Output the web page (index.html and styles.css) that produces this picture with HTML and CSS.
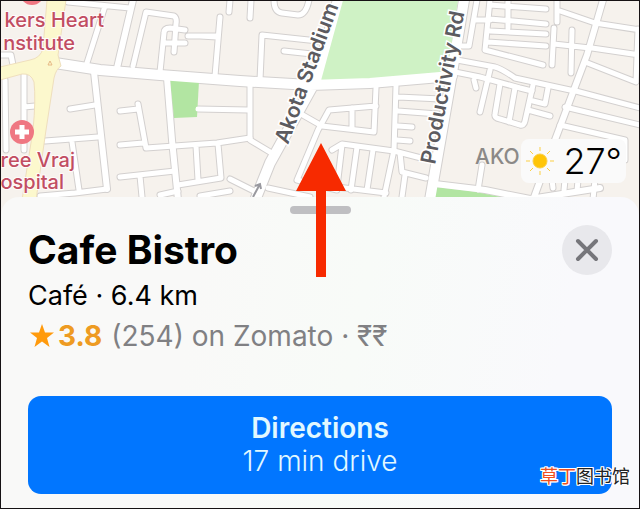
FILE: index.html
```
<!DOCTYPE html>
<html lang="en">
<head>
    <meta charset="UTF-8">
    <meta name="viewport" content="width=device-width, initial-scale=1.0">
    <title>Cafe Bistro</title>
    <link rel="stylesheet" href="styles.css">
</head>
<body>
    <div class="screen">
        <div class="map">
            <svg class="map-canvas" viewBox="1 1 638 216" preserveAspectRatio="xMidYMin slice" aria-label="Map">
                <defs>
                    <g id="small-roads">
                        <path d="M68 2L130 8M105 6L86 66M133 66L146 12L174 16Q177 18 176 24L174 52M160 72L164 33Q164 28 170 28L185 30M166 43H185M188 36H218M220 17L215 76M200 36L217 37"/>
                        <path d="M70 109L95 105M45 141L98 137M72 142L79 190M24 75V150M24 107L35 106M0 55L11 55L13 65M5 80L6 150M40 196L75 193L107 189"/>
                        <path d="M120 111L138 109M138 104L146 148L217 143L250 138M120 145L143 143M120 177L175 171M140 176L142 197M198 109L248 110M196 146L198 180M178 185L221 178L218 144M178 191L160 195"/>
                        <path d="M230 0L229 12M251 0L250 18M274 0Q274 12 282 13L298 15Q306 15 309 0M260 80L262 35L318 41M284 51L312 54M250 85V140L270 152M230 179L256 192M268 188L310 197M200 196L230 191"/>
                        <path d="M301 114L322 126L374 132L376 88M297 180L318 130L329 110L376 106M352 108V128M297 180L337 190M332 150L342 144L394 151L425 159"/>
                        <path d="M396 86L394 150L384 197M398 97L441 99M398 111L438 114M398 126L412 127M397 140L410 141M342 145L337 187L386 193M357 147L351 190M373 150L367 190M400 153L402 172L426 178M405 175L402 197"/>
                        <path d="M477 0L469 46H462M490 0L485 50L543 65M474 20H490M490 5L546 9M490 19L546 24M490 31L546 34M488 42L546 46M508 0V28M457 60L495 67Q502 69 515 78L570 90M455 72L480 77L520 88L532 91M474 80L476 88M490 70L480 112"/>
                        <path d="M500 84L495 114Q494 118 500 119L520 125Q524 126 525 121L533 85M515 88L509 122M533 101L545 104L548 88M528 110L550 116M557 0V22M554 28L552 65M554 44L590 48M572 30L571 73"/>
                        <path d="M560 11L595 23L640 30M592 48L640 55M585 62L636 82L638 29M572 90L640 108M565 107L640 125M560 125L625 140V160M482 165L478 190M552 180L553 188M565 180L564 190M578 180L577 191M595 180L593 199"/>
                    </g>
                    <g id="main-roads">
                        <path d="M133 0L117 68M94 72L101 135L107 189M167 78L172 140L178 200M603 0L587 55L555 140L533 200M435 184L485 190L530 199L600 188"/>
                    </g>
                    <g id="avenues">
                        <path d="M55 63L100 70L160 75L240 81L310 85L370 83L452 76M339 -4L316 80L270 163L254 203M464 0L450 85L430 200"/>
                    </g>
                </defs>

                <rect class="land" x="0" y="0" width="640" height="220"/>
                <use href="#small-roads" class="edge edge-small"/>
                <use href="#main-roads" class="edge edge-main"/>
                <use href="#avenues" class="edge edge-avenue"/>
                <path class="park-light" d="M342 0H458L447 74L380 80H319Z"/>
                <path class="park" d="M170 79L199 81L197 117L174 118Z"/>
                <path class="park" d="M434 187L470 191L506 198V205H428Z"/>
                <use href="#small-roads" class="fill fill-small"/>
                <use href="#main-roads" class="fill fill-main"/>
                <use href="#avenues" class="fill fill-avenue"/>
                <path class="highway" d="M47 0H66L58 55L61 66Q56 69 54 78L46 130L36 200H22L33 130Q36 100 34 82Q31 73 22 74L0 80V67L30 60Q41 58 43 48Z"/>

                <path class="junction" d="M48 65L50 61L52 65Z"/>
                <circle class="pin" cx="32" cy="-7" r="12"/>
                <circle class="pin" cx="22" cy="132" r="12"/>
                <path class="pin-cross" d="M22 125V139M15 132H29"/>
                <path class="oneway" d="M253 197L260 184M255 186L260 184L261 189"/>

                <text class="hospital" x="104" y="27" text-anchor="end">kers Heart</text>
                <text class="hospital" x="75" y="50" text-anchor="end">nstitute</text>
                <text class="hospital" x="75" y="167" text-anchor="end">ree Vraj</text>
                <text class="hospital" x="64" y="189" text-anchor="end">ospital</text>
                <text class="road-name" transform="translate(288 145) rotate(-70)">Akota Stadium</text>
                <text class="road-name" transform="translate(435 165) rotate(-79)">Productivity Rd</text>
                <text class="district" x="475" y="164">AKO</text>
            </svg>
            <div class="weather">
                <svg class="sun" viewBox="0 0 30 30" aria-hidden="true">
                    <circle cx="15" cy="15" r="7"/>
                    <path d="M15 1V5M15 25V29M1 15H5M25 15H29M5 5L8 8M22 22L25 25M5 25L8 22M22 8L25 5"/>
                </svg>
                <span>27°</span>
            </div>
        </div>

        <main class="sheet">
            <div class="handle"></div>
            <header class="place-header">
                <h1>Cafe Bistro</h1>
                <button class="close" type="button" aria-label="Close">
                    <svg viewBox="0 0 24 24"><path d="M3 3L21 21M21 3L3 21"/></svg>
                </button>
            </header>
            <p class="category">Café · 6.4 km</p>
            <p class="rating">
                <svg class="star" viewBox="0 0 24 24" aria-hidden="true"><path d="M12 0L15 8.500H24L17 14L19.500 23L12 17.600L4.500 23L7 14L0 8.500H9Z"/></svg>
                <strong>3.8</strong>
                <span>(254) on Zomato · ₹₹</span>
            </p>
            <button class="directions" type="button">
                <strong>Directions</strong>
                <span>17 min drive</span>
            </button>
        </main>

        <svg class="arrow" viewBox="0 0 50 134" aria-hidden="true"><path d="M25 0L50 48H30V134H20V48H0Z"/></svg>
        <div class="watermark" lang="zh"><span>草丁</span>图书馆</div>
    </div>
</body>
</html>
```
FILE: styles.css
```
* {
    box-sizing: border-box;
}
body {
    margin: 0;
    font-family: Inter, "Noto Sans", sans-serif;
    background-color: #f9f9f9;
}
.screen {
    position: relative;
    min-height: 100vh;
    border: 1px solid #161214;
    overflow: hidden;
    display: flex;
    flex-direction: column;
}

/* map */
.map {
    position: relative;
    height: 216px;
}
.map-canvas {
    display: block;
    width: 100%;
    height: 100%;
}
.land {
    fill: #f6f2ed;
}
.edge, .fill {
    fill: none;
    stroke-linecap: round;
    stroke-linejoin: round;
}
.edge {
    stroke: #d3d0cf;
}
.fill {
    stroke: #fff;
}
.edge-small {
    stroke-width: 7px;
}
.fill-small {
    stroke-width: 5px;
}
.edge-main {
    stroke-width: 8px;
}
.fill-main {
    stroke-width: 6px;
}
.edge-avenue {
    stroke-width: 12px;
}
.fill-avenue {
    stroke-width: 10px;
}
.park-light {
    fill: #cff2c5;
}
.park {
    fill: #b2e5a2;
}
.highway {
    fill: #fcf8cd;
    stroke: #efdfbd;
    stroke-width: 1px;
}
.junction {
    fill: none;
    stroke: #e6b985;
}
.pin {
    fill: #ef7782;
}
.pin-cross {
    stroke: #fff;
    stroke-width: 5px;
}
.oneway {
    fill: none;
    stroke: #99999f;
    stroke-width: 2px;
}
.hospital {
    font-size: 20px;
    font-weight: 500;
    fill: #c14d62;
    stroke: #fffafa;
    stroke-width: 2px;
    paint-order: stroke;
}
.road-name {
    font-size: 21px;
    font-weight: 600;
    fill: #5c5b60;
    stroke: #fff;
    stroke-width: 3px;
    paint-order: stroke;
}
.district {
    font-size: 21px;
    font-weight: 500;
    fill: #8b8987;
}
.weather {
    position: absolute;
    right: 13px;
    top: 138px;
    display: flex;
    align-items: center;
    gap: 8px;
    height: 44px;
    padding: 0 4px;
    border-radius: 8px;
    background-color: #fafafa;
    font-size: 36px;
    font-weight: 300;
    color: #000;
}
.sun {
    width: 30px;
    height: 30px;
    fill: #ffc507;
    stroke: #fbcf45;
    stroke-width: 1px;
}

/* place card */
.sheet {
    position: relative;
    flex: 1;
    margin-top: -20px;
    padding: 9px 27px 14px;
    border-radius: 18px 18px 0 0;
    background-color: #f9f9f9;
    background-image: linear-gradient(100deg, #f9f9f8 30%, #f8fbf8 55%, #f9f9fc 85%);
}
.handle {
    width: 61px;
    height: 8px;
    margin: 0 auto;
    border-radius: 4px;
    background-color: #bfbfc2;
}
.place-header {
    display: flex;
    justify-content: space-between;
    align-items: center;
    height: 50px;
    margin-top: 11px;
}
h1 {
    margin: 0;
    font-size: 39px;
    line-height: 50px;
    font-weight: 700;
    color: #000;
}
.close {
    width: 50px;
    height: 50px;
    padding: 13px;
    border: none;
    border-radius: 50%;
    background-color: #e8e8ec;
    cursor: pointer;
}
.close svg {
    display: block;
    width: 24px;
    height: 24px;
    stroke: #76767b;
    stroke-width: 4px;
    stroke-linecap: round;
}
.category, .rating {
    margin: 0;
    line-height: 40px;
}
.category {
    margin-top: 1px;
    font-size: 27px;
    color: #000;
}
.rating {
    display: flex;
    align-items: center;
    font-size: 28px;
    color: #808083;
}
.rating strong {
    margin: 0 9px 0 4px;
    color: #ee9b22;
}
.star {
    width: 24px;
    height: 24px;
    margin-left: 2px;
    fill: #ff9a0c;
}
.directions {
    display: flex;
    flex-direction: column;
    align-items: center;
    justify-content: center;
    width: 100%;
    height: 98px;
    margin-top: 40px;
    border: none;
    border-radius: 13px;
    background-color: #0176ff;
    color: #e2f8ff;
    font-family: inherit;
    font-size: 28px;
    line-height: 33px;
    cursor: pointer;
}
.directions strong {
    font-weight: 600;
}
.directions span {
    font-weight: 300;
}

/* overlays */
.arrow {
    position: absolute;
    top: 142px;
    left: 50%;
    width: 50px;
    height: 134px;
    margin-left: -24px;
    fill: #f72a00;
}
.watermark {
    position: absolute;
    right: 9px;
    bottom: 20px;
    font-family: "Noto Sans CJK SC", sans-serif;
    font-size: 18px;
    line-height: 26px;
    color: #222;
    text-shadow: 1px 0 #fff, -1px 0 #fff, 0 1px #fff, 0 -1px #fff, 1px 1px #fff, -1px -1px #fff, 1px -1px #fff, -1px 1px #fff;
}
.watermark span {
    color: #f0501e;
}
```
